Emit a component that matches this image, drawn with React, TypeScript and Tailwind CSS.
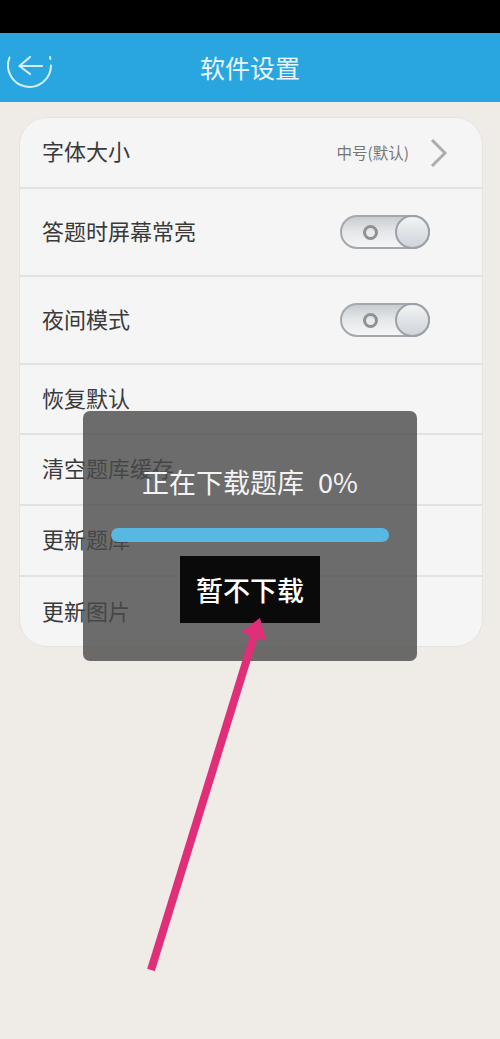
import React from "react";

const font = { fontFamily: '"Noto Sans CJK SC", "Noto Sans", sans-serif' };

function Toggle() {
  return (
    <div className="relative w-[90px] h-[34px] rounded-full border-2 border-[#a4a8ad] bg-gradient-to-b from-[#c9cdd2] via-[#e6e8ea] to-[#f4f5f6] flex items-center">
      <div className="ml-[21px] w-[15px] h-[15px] rounded-full border-[3px] border-[#8f9194]" />
      <div className="absolute right-[-2px] top-[-2px] w-[35px] h-[34px] rounded-full border-2 border-[#9aa1a8] bg-gradient-to-b from-[#f2f3f4] to-[#d0d5da]" />
    </div>
  );
}

function Row({ label, h, right, last }: { label: string; h: string; right?: React.ReactNode; last?: boolean }) {
  return (
    <div className={`${h} flex items-center justify-between pl-[22px] ${last ? "" : "border-b-2 border-[#e2e2e2]"}`}>
      <span className="text-[22px] leading-none text-[#3a3a3a] pb-[5px]">{label}</span>
      {right}
    </div>
  );
}

export default function App() {
  return (
    <div className="relative w-[500px] h-[1039px] overflow-hidden bg-[#efebe7]" style={font}>
      <div className="h-[33px] bg-black" />
      <header className="relative h-[69px] bg-[#29a6e0] flex items-center justify-center">
        <svg className="absolute left-0 top-0" width="60" height="69" viewBox="0 0 60 69" fill="none" stroke="#d4f0fb" strokeLinecap="round">
          <path d="M9.5 24.5 A21.5 21.5 0 1 0 51 32.5" strokeWidth="2" />
          <path d="M50 24 L50.4 26" strokeWidth="2" />
          <path d="M42 33 H20 M30 24 L19.5 33 L30 41" strokeWidth="2.2" strokeLinejoin="round" />
        </svg>
        <h1 className="text-[25px] leading-none text-[#e9f7fd] font-normal">软件设置</h1>
      </header>

      <main className="pt-[15px] pl-[19px]">
        <section className="w-[464px] h-[530px] rounded-[28px] bg-[#f5f5f5] border border-[#e6e4e1] overflow-hidden">
          <Row
            label="字体大小"
            h="h-[71px]"
            right={
              <div className="flex items-center pr-[34px]">
                <span className="text-[15.5px] leading-none text-[#757575] mr-[21px]">中号(默认)</span>
                <svg width="18" height="30" viewBox="0 0 18 30" fill="none" stroke="#adadad" strokeWidth="3">
                  <path d="M2 2 L15 15 L2 28" />
                </svg>
              </div>
            }
          />
          <Row label="答题时屏幕常亮" h="h-[88px]" right={<div className="pr-[52px]"><Toggle /></div>} />
          <Row label="夜间模式" h="h-[88px]" right={<div className="pr-[52px]"><Toggle /></div>} />
          <Row label="恢复默认" h="h-[70px]" />
          <Row label="清空题库缓存" h="h-[71px]" />
          <Row label="更新题库" h="h-[71px]" />
          <Row label="更新图片" h="h-[70px]" last />
        </section>
      </main>

      <div className="absolute left-[83px] top-[411px] w-[334px] h-[250px] rounded-[7px] bg-[#4a4a4a]/80 flex flex-col items-center">
        <div className="mt-[54px] h-[32px] flex items-center gap-[14px] text-[27px] leading-none text-[#f4f4f4]">
          <span>正在下载题库</span>
          <span>0%</span>
        </div>
        <div className="mt-[31px] w-[278px] h-[14px] rounded-full bg-[#58b8e2]" />
        <button className="mt-[14px] w-[140px] h-[67px] bg-[#0a0a0a] text-white text-[27px] font-medium leading-none flex items-center justify-center">
          暂不下载
        </button>
      </div>

      <svg className="absolute left-0 top-0 pointer-events-none" width="500" height="1039" viewBox="0 0 500 1039">
        <path d="M151 970 L255 633" stroke="#e02e78" strokeWidth="8" fill="none" />
        <path d="M259.5 619 L265 640 L243 632 Z" fill="#e02e78" stroke="#e02e78" strokeWidth="1.5" strokeLinejoin="round" />
      </svg>
    </div>
  );
}
